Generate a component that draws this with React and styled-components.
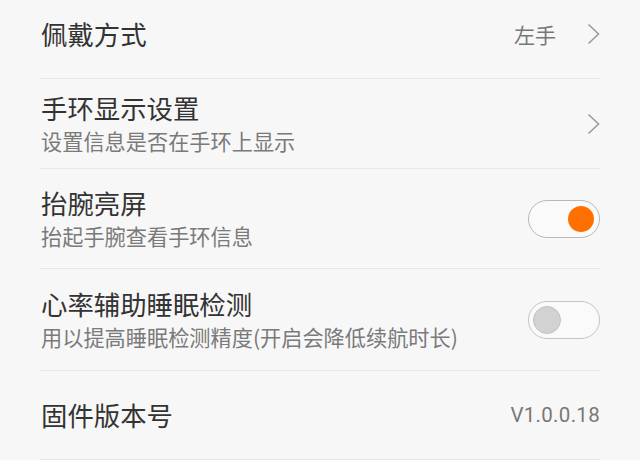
import React from "react";
import styled, { createGlobalStyle } from "styled-components";

const Global = createGlobalStyle`
  html, body {
    margin: 0;
    padding: 0;
    background: #f7f7f7;
  }
  body {
    font-family: "Noto Sans CJK SC", "Noto Sans", Roboto, sans-serif;
    -webkit-font-smoothing: antialiased;
  }
`;

const Page = styled.div`
  width: 640px;
  height: 460px;
  overflow: hidden;
  background: #f7f7f7;
  padding: 0 40px;
  box-sizing: border-box;
`;

const Row = styled.div`
  box-sizing: border-box;
  height: ${(p) => p.$h}px;
  padding-bottom: ${(p) => p.$shift || 0}px;
  display: flex;
  align-items: center;
  justify-content: space-between;
  border-bottom: 1px solid #e7e7e7;
`;

const Texts = styled.div`
  display: flex;
  flex-direction: column;
`;

const Title = styled.div`
  font-size: 26.4px;
  line-height: 34px;
  color: #333333;
  padding-left: 1px;
`;

const Sub = styled.div`
  font-size: 21.2px;
  line-height: 32px;
  color: #7a7a7a;
  padding-left: 1px;
`;

const Trail = styled.div`
  display: flex;
  align-items: center;
  gap: ${(p) => p.$gap || 0}px;
`;

const Value = styled.span`
  font-size: ${(p) => (p.$latin ? 20.5 : 21)}px;
  color: #777777;
  font-family: ${(p) => (p.$latin ? "Roboto, 'Noto Sans', sans-serif" : "inherit")};
  letter-spacing: ${(p) => (p.$latin ? "0.3px" : "0")};
`;

const Track = styled.div`
  box-sizing: border-box;
  width: 72px;
  height: 38px;
  border-radius: 19px;
  border: 1.3px solid ${(p) => (p.$on ? "#b9b9b9" : "#c4c4c4")};
  background: #fafafa;
  display: flex;
  align-items: center;
  justify-content: ${(p) => (p.$on ? "flex-end" : "flex-start")};
  padding: 0 4px;
`;

const Knob = styled.div`
  box-sizing: border-box;
  width: ${(p) => (p.$on ? 26 : 28)}px;
  height: ${(p) => (p.$on ? 26 : 28)}px;
  border-radius: 50%;
  background: ${(p) => (p.$on ? "#ff7000" : "#d2d2d2")};
  border: ${(p) => (p.$on ? "none" : "1px solid #c2c2c2")};
  margin-right: ${(p) => (p.$on ? 1 : 0)}px;
`;

const Chevron = () => (
  <svg width="13" height="22" viewBox="0 0 13 22">
    <polyline
      points="1.5,1.5 11.5,11 1.5,20.5"
      fill="none"
      stroke="#9c9c9c"
      strokeWidth="1.6"
      strokeLinejoin="miter"
    />
  </svg>
);

const Toggle = ({ on }) => (
  <Track $on={on}>
    <Knob $on={on} />
  </Track>
);

export default function App() {
  return (
    <>
      <Global />
      <Page>
        <Row $h={79} $shift={10}>
          <Texts>
            <Title>佩戴方式</Title>
          </Texts>
          <Trail $gap={31}>
            <Value>左手</Value>
            <Chevron />
          </Trail>
        </Row>
        <Row $h={90}>
          <Texts>
            <Title>手环显示设置</Title>
            <Sub>设置信息是否在手环上显示</Sub>
          </Texts>
          <Trail>
            <Chevron />
          </Trail>
        </Row>
        <Row $h={100}>
          <Texts>
            <Title>抬腕亮屏</Title>
            <Sub>抬起手腕查看手环信息</Sub>
          </Texts>
          <Toggle on />
        </Row>
        <Row $h={102}>
          <Texts>
            <Title>心率辅助睡眠检测</Title>
            <Sub>用以提高睡眠检测精度(开启会降低续航时长)</Sub>
          </Texts>
          <Toggle on={false} />
        </Row>
        <Row $h={89}>
          <Texts>
            <Title>固件版本号</Title>
          </Texts>
          <Value $latin>V1.0.0.18</Value>
        </Row>
      </Page>
    </>
  );
}
